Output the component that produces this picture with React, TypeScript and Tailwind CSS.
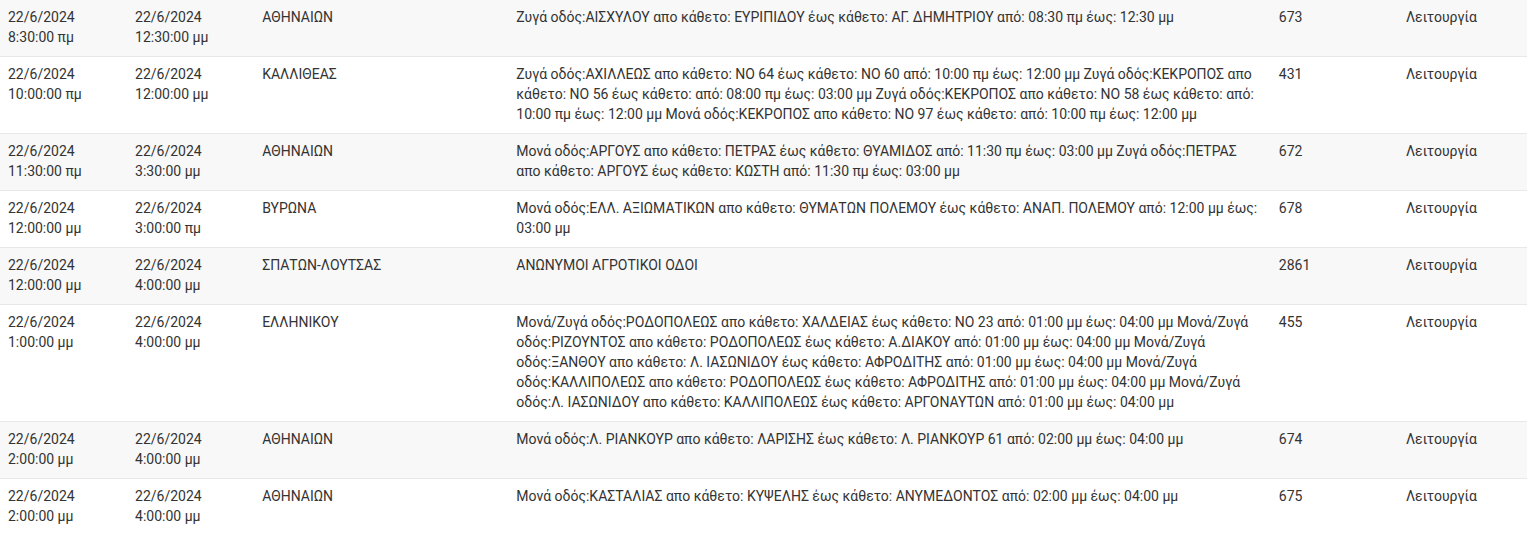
const rows = [
  {
    from: ["22/6/2024", "8:30:00 πμ"],
    to: ["22/6/2024", "12:30:00 μμ"],
    area: "ΑΘΗΝΑΙΩΝ",
    desc: "Ζυγά οδός:ΑΙΣΧΥΛΟΥ απο κάθετο: ΕΥΡΙΠΙΔΟΥ έως κάθετο: ΑΓ. ΔΗΜΗΤΡΙΟΥ από: 08:30 πμ έως: 12:30 μμ",
    code: "673",
  },
  {
    from: ["22/6/2024", "10:00:00 πμ"],
    to: ["22/6/2024", "12:00:00 μμ"],
    area: "ΚΑΛΛΙΘΕΑΣ",
    desc: "Ζυγά οδός:ΑΧΙΛΛΕΩΣ απο κάθετο: ΝΟ 64 έως κάθετο: ΝΟ 60 από: 10:00 πμ έως: 12:00 μμ Ζυγά οδός:ΚΕΚΡΟΠΟΣ απο κάθετο: ΝΟ 56 έως κάθετο: από: 08:00 πμ έως: 03:00 μμ Ζυγά οδός:ΚΕΚΡΟΠΟΣ απο κάθετο: ΝΟ 58 έως κάθετο: από: 10:00 πμ έως: 12:00 μμ Μονά οδός:ΚΕΚΡΟΠΟΣ απο κάθετο: ΝΟ 97 έως κάθετο: από: 10:00 πμ έως: 12:00 μμ",
    code: "431",
  },
  {
    from: ["22/6/2024", "11:30:00 πμ"],
    to: ["22/6/2024", "3:30:00 μμ"],
    area: "ΑΘΗΝΑΙΩΝ",
    desc: "Μονά οδός:ΑΡΓΟΥΣ απο κάθετο: ΠΕΤΡΑΣ έως κάθετο: ΘΥΑΜΙΔΟΣ από: 11:30 πμ έως: 03:00 μμ Ζυγά οδός:ΠΕΤΡΑΣ απο κάθετο: ΑΡΓΟΥΣ έως κάθετο: ΚΩΣΤΗ από: 11:30 πμ έως: 03:00 μμ",
    code: "672",
  },
  {
    from: ["22/6/2024", "12:00:00 μμ"],
    to: ["22/6/2024", "3:00:00 πμ"],
    area: "ΒΥΡΩΝΑ",
    desc: "Μονά οδός:ΕΛΛ. ΑΞΙΩΜΑΤΙΚΩΝ απο κάθετο: ΘΥΜΑΤΩΝ ΠΟΛΕΜΟΥ έως κάθετο: ΑΝΑΠ. ΠΟΛΕΜΟΥ από: 12:00 μμ έως: 03:00 μμ",
    code: "678",
  },
  {
    from: ["22/6/2024", "12:00:00 μμ"],
    to: ["22/6/2024", "4:00:00 μμ"],
    area: "ΣΠΑΤΩΝ-ΛΟΥΤΣΑΣ",
    desc: "ΑΝΩΝΥΜΟΙ ΑΓΡΟΤΙΚΟΙ ΟΔΟΙ",
    code: "2861",
  },
  {
    from: ["22/6/2024", "1:00:00 μμ"],
    to: ["22/6/2024", "4:00:00 μμ"],
    area: "ΕΛΛΗΝΙΚΟΥ",
    desc: "Μονά/Ζυγά οδός:ΡΟΔΟΠΟΛΕΩΣ απο κάθετο: ΧΑΛΔΕΙΑΣ έως κάθετο: ΝΟ 23 από: 01:00 μμ έως: 04:00 μμ Μονά/Ζυγά οδός:ΡΙΖΟΥΝΤΟΣ απο κάθετο: ΡΟΔΟΠΟΛΕΩΣ έως κάθετο: Α.ΔΙΑΚΟΥ από: 01:00 μμ έως: 04:00 μμ Μονά/Ζυγά οδός:ΞΑΝΘΟΥ απο κάθετο: Λ. ΙΑΣΩΝΙΔΟΥ έως κάθετο: ΑΦΡΟΔΙΤΗΣ από: 01:00 μμ έως: 04:00 μμ Μονά/Ζυγά οδός:ΚΑΛΛΙΠΟΛΕΩΣ απο κάθετο: ΡΟΔΟΠΟΛΕΩΣ έως κάθετο: ΑΦΡΟΔΙΤΗΣ από: 01:00 μμ έως: 04:00 μμ Μονά/Ζυγά οδός:Λ. ΙΑΣΩΝΙΔΟΥ απο κάθετο: ΚΑΛΛΙΠΟΛΕΩΣ έως κάθετο: ΑΡΓΟΝΑΥΤΩΝ από: 01:00 μμ έως: 04:00 μμ",
    code: "455",
  },
  {
    from: ["22/6/2024", "2:00:00 μμ"],
    to: ["22/6/2024", "4:00:00 μμ"],
    area: "ΑΘΗΝΑΙΩΝ",
    desc: "Μονά οδός:Λ. ΡΙΑΝΚΟΥΡ απο κάθετο: ΛΑΡΙΣΗΣ έως κάθετο: Λ. ΡΙΑΝΚΟΥΡ 61 από: 02:00 μμ έως: 04:00 μμ",
    code: "674",
  },
  {
    from: ["22/6/2024", "2:00:00 μμ"],
    to: ["22/6/2024", "4:00:00 μμ"],
    area: "ΑΘΗΝΑΙΩΝ",
    desc: "Μονά οδός:ΚΑΣΤΑΛΙΑΣ απο κάθετο: ΚΥΨΕΛΗΣ έως κάθετο: ΑΝΥΜΕΔΟΝΤΟΣ από: 02:00 μμ έως: 04:00 μμ",
    code: "675",
  },
];

export default function App() {
  return (
    <div className="w-[1527px] bg-white font-['Roboto',sans-serif] text-[14px] leading-[20px] text-[#333]">
      {rows.map((r, idx) => (
        <div
          key={idx}
          className={`grid grid-cols-12 border-b border-[#e8e8e8] pr-[2px] ${idx % 2 === 0 ? "bg-[#f8f8f8]" : "bg-white"}`}
        >
          <div className="col-span-1 px-2 pt-[7px] pb-[9px]">
            {r.from[0]} {r.from[1]}
          </div>
          <div className="col-span-1 px-2 pt-[7px] pb-[9px]">
            {r.to[0]} {r.to[1]}
          </div>
          <div className="col-span-2 px-2 pt-[7px] pb-[9px]">{r.area}</div>
          <div className="col-span-6 px-2 pt-[7px] pb-[9px]">{r.desc}</div>
          <div className="col-span-1 px-2 pt-[7px] pb-[9px]">{r.code}</div>
          <div className="col-span-1 px-2 pt-[7px] pb-[9px]">Λειτουργία</div>
        </div>
      ))}
    </div>
  );
}
